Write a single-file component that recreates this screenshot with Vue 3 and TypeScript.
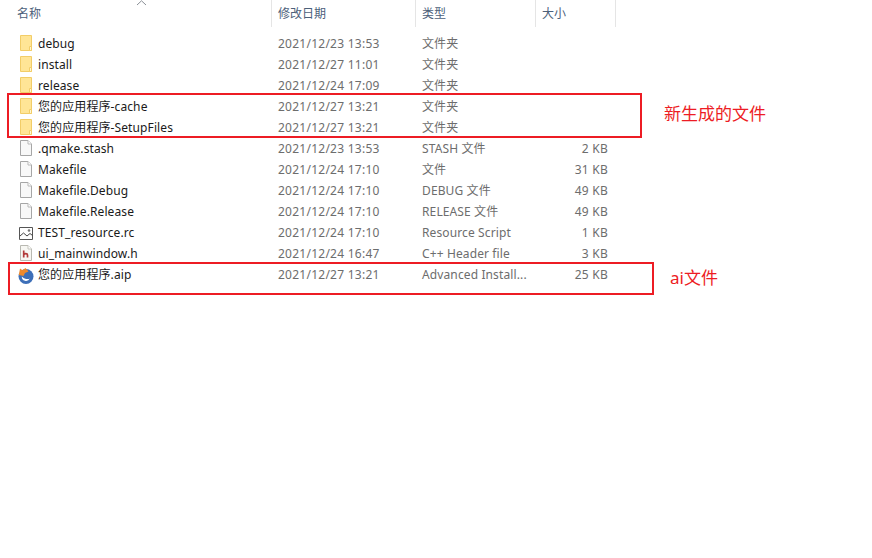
<script setup lang="ts">
interface Row { name: string; date: string; type: string; size: string; icon: string }
const rows: Row[] = [
  { name: 'debug', date: '2021/12/23 13:53', type: '文件夹', size: '', icon: 'folder' },
  { name: 'install', date: '2021/12/27 11:01', type: '文件夹', size: '', icon: 'folder' },
  { name: 'release', date: '2021/12/24 17:09', type: '文件夹', size: '', icon: 'folder' },
  { name: '您的应用程序-cache', date: '2021/12/27 13:21', type: '文件夹', size: '', icon: 'folder' },
  { name: '您的应用程序-SetupFiles', date: '2021/12/27 13:21', type: '文件夹', size: '', icon: 'folder' },
  { name: '.qmake.stash', date: '2021/12/23 13:53', type: 'STASH 文件', size: '2 KB', icon: 'file' },
  { name: 'Makefile', date: '2021/12/24 17:10', type: '文件', size: '31 KB', icon: 'file' },
  { name: 'Makefile.Debug', date: '2021/12/24 17:10', type: 'DEBUG 文件', size: '49 KB', icon: 'file' },
  { name: 'Makefile.Release', date: '2021/12/24 17:10', type: 'RELEASE 文件', size: '49 KB', icon: 'file' },
  { name: 'TEST_resource.rc', date: '2021/12/24 17:10', type: 'Resource Script', size: '1 KB', icon: 'image' },
  { name: 'ui_mainwindow.h', date: '2021/12/24 16:47', type: 'C++ Header file', size: '3 KB', icon: 'header' },
  { name: '您的应用程序.aip', date: '2021/12/27 13:21', type: 'Advanced Install...', size: '25 KB', icon: 'aip' },
]
</script>

<template>
  <div class="page">
    <div class="head">
      <div class="hcell name">名称<svg class="sort" width="11" height="6" viewBox="0 0 11 6"><path d="M1 5 5.500 .8 10 5" fill="none" stroke="#8a8f96" /></svg></div>
      <div class="hcell">修改日期</div>
      <div class="hcell">类型</div>
      <div class="hcell">大小</div>
    </div>
    <div class="list">
      <div v-for="r in rows" :key="r.name" class="row">
        <div class="c-name">
          <svg class="ico" width="16" height="21" viewBox="0 -2 16 21">
            <template v-if="r.icon === 'folder'">
              <path d="M2.500 .5h11v15h-11z" fill="#ffe596" stroke="#f2cd68" />
              <path d="M11.500 15.500v-4h2v4z" fill="#fff6d2" stroke="#f2cd68" />
            </template>
            <template v-else-if="r.icon === 'file'">
              <path d="M2.500 .5H10l3.500 3.500v11.500H2.500z" fill="#f8f8f8" stroke="#a6a6a6" />
              <path d="M10 .5V4h3.500" fill="#fff" stroke="#b8b8b8" />
            </template>
            <template v-else-if="r.icon === 'image'">
              <path d="M1.500 3.500h13v12h-13z" fill="#fff" stroke="#555" />
              <path d="M2 12 5.500 9l3.500 3 3-2.500 2.500 2" fill="none" stroke="#444" />
              <circle cx="11" cy="6.500" r="1.300" fill="#777" />
            </template>
            <template v-else-if="r.icon === 'header'">
              <path d="M2.500 .5H10l3.500 3.500v11.500H2.500z" fill="#f7f7f3" stroke="#b9b9b2" />
              <path d="M10 .5V4h3.500" fill="#fff" stroke="#c6c6bf" />
              <path d="M5.700 5.500v7M5.700 9.500c.6-1 3.800-1.500 3.800.5v2.500" fill="none" stroke="#b23a3a" stroke-width="1.700" />
            </template>
            <template v-else>
              <circle cx="8" cy="10.500" r="7.500" fill="#3d6fb8" />
              <path d="M3.800 10.500a4.200 4.200 0 0 0 8 2c-1.500 1-5 1-8-2z" fill="#fff" />
              <path d="M.8 9 2 2.500l2.500 1.800L7.500 2l3 3.500L7 7l-1.500 3z" fill="#f08a2c" />
            </template>
          </svg>
          <span class="nm">{{ r.name }}</span>
        </div>
        <div class="c-date">{{ r.date }}</div>
        <div class="c-type">{{ r.type }}</div>
        <div class="c-size">{{ r.size }}</div>
      </div>
    </div>
    <div class="box box-a"></div>
    <div class="box box-b"></div>
    <div class="note note-a">新生成的文件</div>
    <div class="note note-b">ai文件</div>
  </div>
</template>

<style>
html, body { margin: 0; background: #fff; }
</style>

<style scoped>
.page {
  position: relative;
  width: 872px;
  height: 558px;
  overflow: hidden;
  background: #fff;
  font-family: "Noto Sans", "Noto Sans CJK SC", sans-serif;
  font-size: 12px;
}
.head {
  display: grid;
  grid-template-columns: 272px 144px 120px 80px;
  height: 27px;
}
.hcell {
  position: relative;
  box-sizing: border-box;
  padding-left: 6px;
  line-height: 27px;
  color: #4c607a;
  border-right: 1px solid #e5e5e5;
}
.hcell.name { padding-left: 17px; }
.sort { position: absolute; left: 136px; top: 0; }
.list { padding-top: 6px; }
.row {
  display: grid;
  grid-template-columns: 278px 144px 120px 66px;
  height: 21px;
  line-height: 21px;
  color: #6d6d6d;
}
.c-name { display: flex; align-items: center; padding-left: 18px; color: #1a1a1a; letter-spacing: .1px; }
.c-date { letter-spacing: .25px; }
.c-type { letter-spacing: .12px; }
.ico { flex: none; }
.nm { margin-left: 4px; }
.c-size { text-align: right; letter-spacing: .25px; }
.box { position: absolute; box-sizing: border-box; border: 2px solid #ed1c24; }
.box-a { left: 7px; top: 93px; width: 635px; height: 45px; }
.box-b { left: 8px; top: 262px; width: 646px; height: 33px; }
.note { position: absolute; color: #ed1c24; font-size: 17px; line-height: 24px; }
.note-a { left: 664px; top: 102px; }
.note-b { left: 670px; top: 266px; }
</style>
